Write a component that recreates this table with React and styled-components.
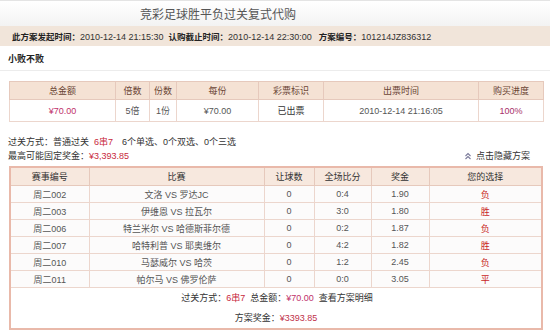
import React from "react";
import styled, { createGlobalStyle } from "styled-components";

const GlobalStyle = createGlobalStyle`
  html, body { margin: 0; padding: 0; background: #fff; }
  body {
    font-family: "Liberation Sans", "Noto Sans CJK SC", sans-serif;
    font-size: 9px;
    color: #333;
  }
`;

const Page = styled.div`
  width: 550px;
  height: 331px;
  overflow: hidden;
  background: #fff;
`;

const TitleBar = styled.div`
  height: 26px;
  box-sizing: border-box;
  border-top: 1px solid #e4e4e4;
  background: linear-gradient(#ffffff, #f3f3f3);
  padding-left: 140px;
  display: flex;
  align-items: center;
  font-family: "Noto Sans CJK SC", sans-serif;
  font-size: 12px;
  color: #555;
`;

const InfoBar = styled.div`
  height: 20px;
  background: #f1e5da;
  padding-left: 12px;
  display: flex;
  align-items: center;
  gap: 5px;
`;

const InfoItem = styled.span`
  white-space: nowrap;
  color: #333;
  margin-left: ${(p) => p.$ml || 0}px;
`;

const Label = styled.b`
  font-weight: 700;
  font-size: 8.5px;
  color: #222;
`;

const SectionTitle = styled.div`
  height: 23px;
  padding: 1px 0 0 8px;
  display: flex;
  align-items: center;
  font-weight: 700;
  color: #222;
  border-bottom: 1px solid #ececec;
`;

const TableWrap = styled.div`
  padding: ${(p) => p.$top || 0}px 7px 0 9px;
`;

const Grid = styled.table`
  width: 534px;
  border-collapse: collapse;
  table-layout: fixed;
  text-align: center;
  border: ${(p) => (p.$strong ? "2px solid #e9b9aa" : "1px solid #e3c3b4")};
`;

const HeadCell = styled.th`
  height: ${(p) => p.$h}px;
  padding: 0;
  font-weight: 400;
  background: ${(p) => p.$bg};
  color: ${(p) => p.$color};
  border: 1px solid #e6c9bc;
`;

const Cell = styled.td`
  height: ${(p) => p.$h}px;
  padding: 0;
  color: ${(p) => p.$color || "#555"};
  border: 1px solid #ecd6cd;
  background: ${(p) => p.$bg || "#fff"};
  white-space: nowrap;
`;

const Money = styled.span`
  color: ${(p) => p.$color || "#c0306a"};
`;

const Summary = styled.div`
  padding: 13px 20px 3px 8px;
  line-height: 14px;
`;

const SummaryRow = styled.div`
  display: flex;
  justify-content: space-between;
  align-items: center;
`;

const Red = styled.span`
  color: #c8283c;
  margin: ${(p) => p.$m || "0"};
`;

const HideLink = styled.span`
  display: inline-flex;
  align-items: center;
  gap: 4px;
  color: #333;
`;

const FooterCell = styled.td`
  padding: 0;
  line-height: 20px;
  text-align: center;
  border: 1px solid #ecd6cd;
  color: #333;
`;

const FooterLine = styled.div`
  padding-left: ${(p) => p.$pl || 0}px;
`;

const Link = styled.span`
  color: #333;
  margin-left: 5px;
`;

const head1 = ["总金额", "倍数", "份数", "每份", "彩票标识", "出票时间", "购买进度"];
const w1 = [106, 34, 27, 82, 65, 155, 65];

const head2 = ["赛事编号", "比赛", "让球数", "全场比分", "奖金", "您的选择"];
const w2 = [79, 175, 50, 57, 58, 113];

const matches = [
  ["周二002", "文洛  VS  罗达JC", "0", "0:4", "1.90", "负"],
  ["周二003", "伊维恩  VS  拉瓦尔", "0", "3:0", "1.80", "胜"],
  ["周二006", "特兰米尔  VS  哈德斯菲尔德", "0", "0:2", "1.87", "负"],
  ["周二007", "哈特利普  VS  耶奥维尔", "0", "4:2", "1.82", "胜"],
  ["周二010", "马瑟威尔  VS  哈茨", "0", "1:2", "2.45", "负"],
  ["周二011", "帕尔马  VS  佛罗伦萨", "0", "0:0", "3.05", "平"],
];

const UpIcon = () => (
  <svg width="8" height="8" viewBox="0 0 8 8" fill="none" stroke="#7a7a9a" strokeWidth="1.1">
    <polyline points="1.5,4 4,1.5 6.5,4" />
    <polyline points="1.5,7 4,4.5 6.5,7" />
  </svg>
);

export default function App() {
  return (
    <Page>
      <GlobalStyle />
      <TitleBar>竞彩足球胜平负过关复式代购</TitleBar>
      <InfoBar>
        <InfoItem><Label>此方案发起时间：</Label>2010-12-14 21:15:30</InfoItem>
        <InfoItem><Label>认购截止时间：</Label>2010-12-14 22:30:00</InfoItem>
        <InfoItem $ml={2}><Label>方案编号：</Label>101214JZ836312</InfoItem>
      </InfoBar>
      <SectionTitle>小败不败</SectionTitle>
      <TableWrap $top={10}>
        <Grid>
          <colgroup>
            {w1.map((w, i) => <col key={i} style={{ width: w }} />)}
          </colgroup>
          <thead>
            <tr>
              {head1.map((h) => (
                <HeadCell key={h} $h={17} $bg="#f5e2d4" $color="#6a4534">{h}</HeadCell>
              ))}
            </tr>
          </thead>
          <tbody>
            <tr>
              <Cell $h={21}><Money>¥70.00</Money></Cell>
              <Cell $h={21}>5倍</Cell>
              <Cell $h={21}>1份</Cell>
              <Cell $h={21}>¥70.00</Cell>
              <Cell $h={21} $color="#333">已出票</Cell>
              <Cell $h={21}>2010-12-14 21:16:05</Cell>
              <Cell $h={21} $color="#a8306a">100%</Cell>
            </tr>
          </tbody>
        </Grid>
      </TableWrap>
      <Summary>
        <div>
          过关方式：普通过关<Red $m="0 0 0 5px">6串7</Red>
          <span style={{ marginLeft: 9 }}>6个单选、0个双选、0个三选</span>
        </div>
        <SummaryRow>
          <span>最高可能固定奖金：<Red>¥3,393.85</Red></span>
          <HideLink><UpIcon />点击隐藏方案</HideLink>
        </SummaryRow>
      </Summary>
      <TableWrap>
        <Grid $strong>
          <colgroup>
            {w2.map((w, i) => <col key={i} style={{ width: w }} />)}
          </colgroup>
          <thead>
            <tr>
              {head2.map((h) => (
                <HeadCell key={h} $h={17} $bg="#f7e8de" $color="#333">{h}</HeadCell>
              ))}
            </tr>
          </thead>
          <tbody>
            {matches.map((m) => (
              <tr key={m[0]}>
                {m.map((v, i) => (
                  <Cell key={i} $h={16} $bg="#fcfbfb" $color={i === 5 ? "#c81e1e" : "#555"}>{v}</Cell>
                ))}
              </tr>
            ))}
            <tr>
              <FooterCell colSpan={6}>
                <FooterLine $pl={2}>
                  过关方式：<Red>6串7</Red>&nbsp;&nbsp;总金额：<Money>¥70.00</Money><Link>查看方案明细</Link>
                </FooterLine>
                <FooterLine>
                  方案奖金：<Money $color="#c0304a">¥3393.85</Money>
                </FooterLine>
              </FooterCell>
            </tr>
          </tbody>
        </Grid>
      </TableWrap>
    </Page>
  );
}
